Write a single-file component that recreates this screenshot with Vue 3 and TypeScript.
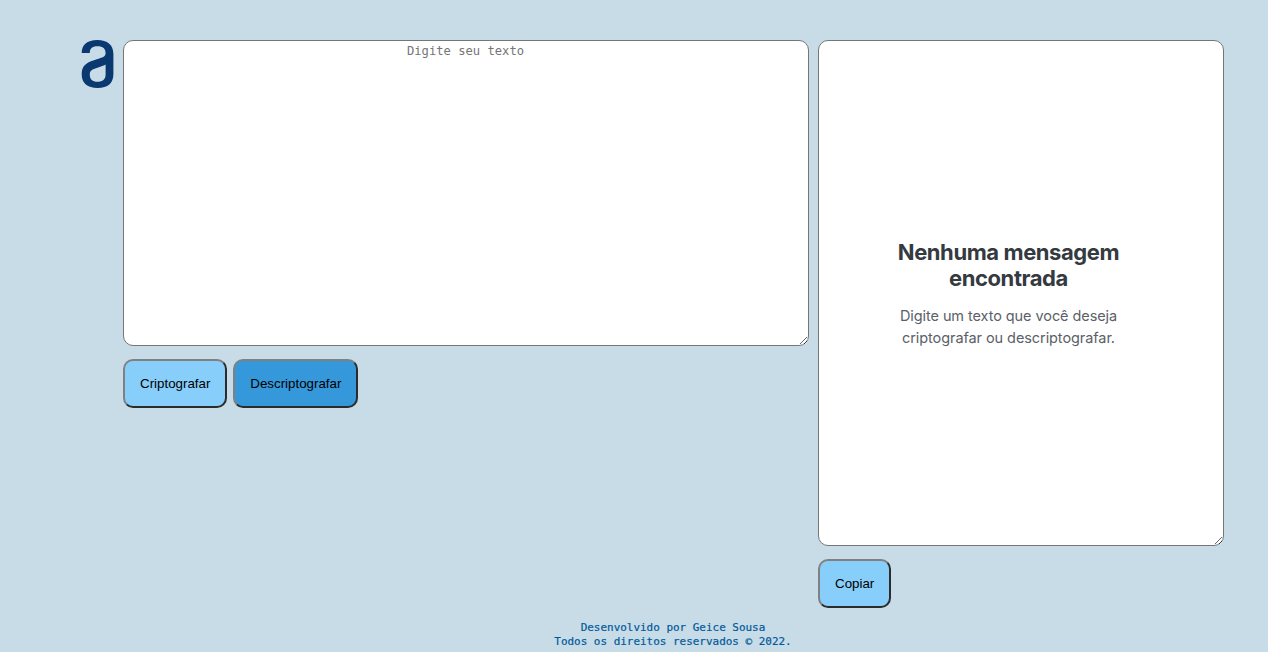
<script setup lang="ts">
import { ref } from 'vue'

const message = ref('')
const result = ref('')

const rules: [string, string][] = [
  ['e', 'enter'],
  ['i', 'imes'],
  ['a', 'ai'],
  ['o', 'ober'],
  ['u', 'ufat'],
]

function encrypt(): void {
  result.value = rules.reduce((text, [from, to]) => text.split(from).join(to), message.value)
}

function decrypt(): void {
  result.value = rules.reduce((text, [from, to]) => text.split(to).join(from), message.value)
}

function copy(): void {
  navigator.clipboard?.writeText(result.value)
}
</script>

<template>
  <div class="page">
    <main class="content">
      <svg class="logo" width="34" height="48" viewBox="0 0 34 48" aria-hidden="true">
        <path
          fill-rule="evenodd"
          d="M.7 13C.7 5 6 0 16.300 0S32.400 5 32.400 14V34C32.400 43 27 48 16.700 48S.7 43 .7 34.500C.7 26.500 4 23 13 20.200C21 17.700 24.600 17 24.600 13.300C24.600 8.500 22 6.200 16.500 6.200S8.800 8.500 8.800 13ZM24.600 24.500C22.500 25.700 19 27 15 28.200C11 29.500 8.800 30.500 8.800 34.500C8.800 39.500 11.500 41.800 16.500 41.800S24.600 39.500 24.600 34.500Z"
        />
      </svg>
      <section class="column">
        <textarea v-model="message" class="box box-input" placeholder="Digite seu texto"></textarea>
        <div class="actions">
          <button class="btn" @click="encrypt">Criptografar</button>
          <button class="btn btn-dark" @click="decrypt">Descriptografar</button>
        </div>
      </section>
      <section class="column output">
        <div class="stack">
          <textarea v-model="result" class="box box-output"></textarea>
          <div v-if="!result" class="empty">
            <h2>Nenhuma mensagem<br />encontrada</h2>
            <p>Digite um texto que você deseja<br />criptografar ou descriptografar.</p>
          </div>
        </div>
        <div class="actions">
          <button class="btn" @click="copy">Copiar</button>
        </div>
      </section>
    </main>
    <footer class="footer">
      <div>Desenvolvido por Geice Sousa</div>
      <div>Todos os direitos reservados © 2022.</div>
    </footer>
  </div>
</template>

<style>
body {
  background: #c8dce7;
  overflow: hidden;
}
</style>

<style scoped>
.page {
  box-sizing: border-box;
  height: 652px;
  padding: 40px 0 0 81px;
  background: #c8dce7;
}
.content {
  display: flex;
  align-items: flex-start;
}
.logo {
  flex: none;
  margin-right: 8px;
  fill: #0a3871;
}
.column {
  display: flex;
  flex-direction: column;
  gap: 13px;
}
.output {
  margin-left: 9px;
}
.box {
  display: block;
  box-sizing: border-box;
  margin: 0;
  padding: 2px 3px 2px 2px;
  border: 1px solid #767676;
  border-radius: 10px;
  background: #fff;
  font: 12.17px/16px 'DejaVu Sans Mono', monospace;
  text-align: center;
  outline: none;
}
.box::placeholder {
  color: #757575;
}
.box-input {
  width: 686px;
  height: 306px;
}
.box-output {
  width: 406px;
  height: 506px;
}
.stack {
  display: grid;
}
.stack > * {
  grid-area: 1 / 1;
}
.empty {
  padding: 199px 25px 0 0;
  text-align: center;
  font-family: Inter, sans-serif;
  pointer-events: none;
}
.empty h2 {
  margin: 0;
  color: #343a40;
  font-size: 22px;
  font-weight: 700;
  letter-spacing: -0.42px;
  line-height: 26px;
}
.empty p {
  margin: 14px 0 0;
  color: #5b6167;
  font-size: 14.5px;
  letter-spacing: -0.08px;
  line-height: 22px;
}
.actions {
  display: flex;
  gap: 6px;
}
.btn {
  box-sizing: border-box;
  height: 49px;
  margin: 0;
  padding: 15px;
  border: 2px solid;
  border-color: #808080 #2b2b2b #2b2b2b #808080;
  border-radius: 10px;
  background: #87cefa;
  color: #000;
  font: 13.333px/15px 'Liberation Sans', Arial, sans-serif;
}
.btn-dark {
  width: 125px;
  padding: 15px 14px;
  background: #3498db;
}
.footer {
  margin: 13px 0 0;
  padding-right: 3px;
  color: #00599b;
  font: 10.96px/14px 'DejaVu Sans Mono', monospace;
  -webkit-text-stroke: 0.2px #00599b;
  text-align: center;
}
</style>
